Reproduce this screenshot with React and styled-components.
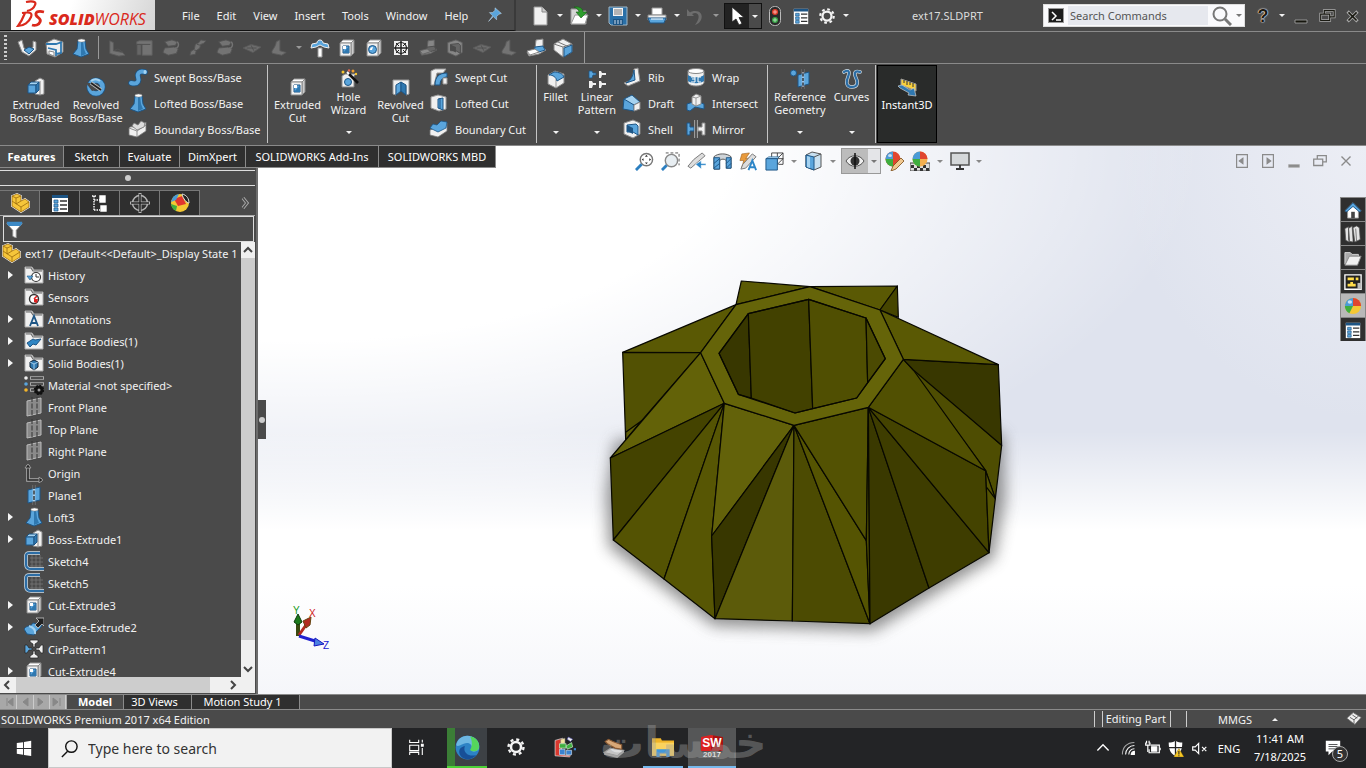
import React, { useState } from 'react';
import styled, { createGlobalStyle } from 'styled-components';

const GlobalStyle = createGlobalStyle`
  * { box-sizing: border-box; }
  body {
    margin: 0;
    background: #4a4a4a;
    font-family: 'Noto Sans', 'Open Sans', sans-serif;
    font-size: 11px;
    color: #f2f2f2;
  }
  button {
    margin: 0;
    padding: 0;
    border: none;
    background: none;
    color: inherit;
    font: inherit;
  }
  svg { display: block; flex: none; }
`;

const BLUE = '#5aa5dc';
const LIGHT = '#a5d2f0';
const NAVY = '#1d5585';
const WHITE = '#f0f0f0';
const INK = '#222';

/* ---------- icons, all on a 20 x 20 grid ---------- */

const cube = (
  <g stroke={NAVY} strokeWidth="1">
    <path d="M2 8l3-3h8l-3 3z" fill={LIGHT} />
    <path d="M2 8h8v8H2z" fill={BLUE} />
    <path d="M10 8l3-3v8l-3 3z" fill="#2f78b0" />
  </g>
);

const folderBase = (
  <g>
    <path d="M1 18V2h7l2 3h9v13z" fill={WHITE} stroke="#aaa" />
    <path d="M2 3h5l2 3h9" stroke="#666" strokeWidth="1.200" fill="none" />
  </g>
);

const boxWithHole = (
  <g>
    <path d="M3 5l3-3h11l-3 3z" fill="#fff" stroke="#999" />
    <path d="M14 5l3-3v13l-3 3z" fill="#ccc" stroke="#888" />
    <path d="M3 5h11v13H3z" fill={WHITE} stroke="#888" />
  </g>
);

const arrowHead = (x, y, r, fill) => (
  <path d="M0 -4h2l2 3h3v2H4L2 4H0z" fill={fill} stroke="#222" strokeWidth=".7" transform={`translate(${x} ${y}) rotate(${r})`} />
);

const icons = {
  extrude: <g><path d="M9 4l5-3 4 2v14l-4 1-5-1z" fill={WHITE} stroke="#888" /><path d="M14 4v14" stroke="#888" />{cube}</g>,
  revolve: <g><circle cx="10" cy="10" r="6.500" fill="none" stroke={NAVY} strokeWidth="6" /><circle cx="10" cy="10" r="6.500" fill="none" stroke={BLUE} strokeWidth="4.600" /><path d="M5 4a7 7 0 019 0" fill="none" stroke={LIGHT} strokeWidth="2" /><path d="M0 6l6 8 4-1-6-7z" fill="#4a4a4a" /><path d="M5 6l10 7" stroke="#bbb" strokeWidth="3.400" /><path d="M5 6l10 7" stroke={INK} strokeWidth="1.800" /></g>,
  sweep: <g fill="none" strokeLinecap="round"><path d="M3 16c8 2 8-3 7-6s1-7 7-5" stroke={NAVY} strokeWidth="5.600" /><path d="M3 16c8 2 8-3 7-6s1-7 7-5" stroke={BLUE} strokeWidth="4" /><ellipse cx="17" cy="5" rx="1.500" ry="2" fill={LIGHT} /></g>,
  loft: <g><path d="M7 3h7l1 8 3 5-8 3-8-3 4-5z" fill={BLUE} stroke={NAVY} /><path d="M10 4v14l5-2-2-5-1-8z" fill="#2f78b0" /><ellipse cx="10.500" cy="2.500" rx="3.500" ry="1.500" fill="#fff" stroke="#888" strokeWidth=".6" /></g>,
  boundary: <g stroke="#777" strokeWidth=".8"><path d="M1 9c3-3 5 1 8-2s5 1 9-4v9l-9 6-8-2z" fill={WHITE} /><path d="M1 9l8 3 9-6" fill="none" /><path d="M9 12v6" /><path d="M4 7l2-3 4 2 3-4 4 2-1 4-7 3z" fill="#ddd" /></g>,
  cut: <g>{boxWithHole}<path d="M6 8h6v7H6z" fill={BLUE} stroke={NAVY} /><path d="M6 8h3v3H6z" fill="#fff" /><path d="M12 8v7H6z" fill="#2f78b0" /></g>,
  hole: <g>{boxWithHole}<circle cx="8.500" cy="11.500" r="4" fill={BLUE} stroke={NAVY} /><path d="M6 12a3 3 0 013-3l-1 3z" fill="#fff" /></g>,
  wizard: <g><path d="M3 7l3-2h11l-2 2v11H3z" fill={WHITE} stroke="#888" /><circle cx="9" cy="13" r="3.500" fill={BLUE} stroke={NAVY} /><path d="M10 5l9 9" stroke="#111" strokeWidth="2.600" /><path d="M8 3l2 2" stroke="#fff" strokeWidth="2" /><circle cx="4" cy="3" r="1.500" fill="#f4c430" /><circle cx="14" cy="2" r="1.500" fill="#f0a030" /><circle cx="10" cy="1.500" r="1.200" fill="#e86a50" /><circle cx="17" cy="5" r="1.200" fill="#f4c430" /></g>,
  revolveCut: <g><path d="M2 3h16v14l-3 1V9l-5-3-5 3v9l-3-1z" fill={WHITE} stroke="#999" /><path d="M5 8l5-3v9l-5 4z" fill={BLUE} stroke={NAVY} /><path d="M15 8l-5-3v9l5 4z" fill="#2f78b0" stroke={NAVY} /></g>,
  sweptCut: <g><path d="M2 4l4-2h11l-3 4H8L5 18H2z" fill={WHITE} stroke="#999" /><path d="M6 18c0-8 4-12 12-12v4c-5 0-7 4-7 8z" fill={BLUE} stroke={NAVY} /><path d="M14 11h4v6h-4z" fill={WHITE} stroke="#999" /></g>,
  loftCut: <g><path d="M2 4l7-2 8 2v12l-7 2-8-3z" fill={WHITE} stroke="#999" /><path d="M9 6l5-1v12l-5-2z" fill={BLUE} stroke={NAVY} /><path d="M11 5v11" stroke={NAVY} /></g>,
  boundaryCut: <g strokeWidth=".8"><path d="M1 11l8-3 9-4v8l-9 6-8-2z" fill={WHITE} stroke="#777" /><path d="M1 9l3-4 4 1 4-4 6 1-1 6-8 4z" fill={BLUE} stroke={NAVY} /></g>,
  fillet: <g><path d="M2 6l7-4 9 3v9l-8 5-8-4z" fill={WHITE} stroke="#888" /><path d="M10 10v9" stroke="#999" /><path d="M8 3c5 0 9 2 10 5l-7 4C10 8 7 6 3 6z" fill={BLUE} stroke={NAVY} /></g>,
  pattern: <g strokeWidth=".8"><path d="M2 2h3l1 2h3v2H6l-1 3H2z" fill={BLUE} stroke={NAVY} /><path d="M12 2h2l1 2h4v2h-4l-1 3h-2zM2 12h3l1 2h3v2H6l-1 3H2zM12 12h2l1 2h4v2h-4l-1 3h-2z" fill={WHITE} /></g>,
  rib: <g><path d="M12 2l4-1 2 13-12 5-4-3 8-3z" fill={WHITE} stroke="#888" /><path d="M12 3l1 10-9 3c5-3 7-7 8-13z" fill={BLUE} stroke={NAVY} /></g>,
  draft: <g><path d="M2 6l8-4 8 7-6 3-10-1z" fill={LIGHT} stroke={NAVY} /><path d="M2 6l10 6v6l-11-2z" fill={BLUE} stroke={NAVY} /><path d="M12 12l6-3v7l-6 2z" fill={WHITE} stroke="#888" /></g>,
  shell: <g><path d="M2 4l9-3 7 3v11l-7 4-9-4z" fill={WHITE} stroke="#888" /><path d="M5 6l9-1 2 2v9l-5-3H5z" fill={BLUE} stroke={NAVY} /><path d="M5 6l6 3v6l-6-3z" fill={NAVY} /></g>,
  wrap: <g><path d="M2 4v12c2 4 14 4 16 0V4z" fill={WHITE} stroke="#888" /><ellipse cx="10" cy="4" rx="8" ry="2.500" fill="#fff" stroke="#888" /><path d="M2 8c4 3 12 3 16 0v6c-4 3-12 3-16 0z" fill="#2f78b0" /><path d="M5 10h4v2H6M9 12v3H5M12 10h3M12 10v5h3" stroke="#fff" fill="none" /></g>,
  intersect: <g><path d="M1 11l9-3 8 3v5l-9-2-5 4-3-1z" fill={BLUE} stroke={NAVY} /><path d="M6 4l4-3 5 2v8l-5 2-4-2z" fill={WHITE} stroke="#888" /><path d="M10 5v8M6 4l4 1 5-2" stroke="#999" fill="none" /></g>,
  mirror: <g><path d="M1 4h3v4h4v4H4v4H1z" fill={BLUE} stroke={NAVY} /><path d="M19 4h-3v4h-4v4h4v4h3z" fill={WHITE} stroke="#888" /><path d="M10 1v18" stroke="#eee" strokeWidth="3" /><path d="M10 1v18" stroke="#222" strokeWidth="1.500" /></g>,
  refgeo: <g><circle cx="3.500" cy="4" r="3" fill={BLUE} stroke={NAVY} /><path d="M8 6l11-3v12L8 18z" fill={BLUE} stroke={NAVY} /><path d="M13 0v20" stroke="#dde" strokeWidth="2.600" opacity=".5" /><path d="M13 0v20" stroke="#222" strokeWidth="1.300" strokeDasharray="3 1.500" /></g>,
  curves: <g fill="none" strokeLinecap="round"><path d="M2 3c5-3 6 0 4 5s-2 10 4 10 6-5 4-9-2-8 4-6" stroke="#ccd8e0" strokeWidth="3.600" /><path d="M2 3c5-3 6 0 4 5s-2 10 4 10 6-5 4-9-2-8 4-6" stroke="#2c6da5" strokeWidth="2.200" /></g>,
  instant: <g><path d="M4 2l15 5v7L4 8z" fill="#f7cf3c" stroke="#999" /><path d="M7 3v3M10 4v4M13 5v3M16 6v4" stroke="#333" /><path d="M1 9l4-1 8 5 4-2 2 8-8-1 1-2-9-5z" fill="#2f78b0" stroke="#ccc" strokeWidth=".7" /></g>,

  page: <g><path d="M4 1h8l5 5v13H4z" fill={WHITE} stroke="#999" /><path d="M12 1v5h5" fill="#ccc" stroke="#888" /></g>,
  open: <g><path d="M2 18V3h6l2 2h7v13z" fill="#d5d5d5" stroke="#999" /><path d="M2 18L6 9h13l-3 9z" fill="#fff" stroke="#999" /><path d="M5 1c6-1 9 2 9 5h4l-6 6-5-6h3c0-2-2-4-5-5z" fill="#2e9e2e" stroke="#155a15" strokeWidth=".6" /></g>,
  save: <g><path d="M1 1h18v18H3l-2-2z" fill="#2a70a8" stroke="#9fb6c6" /><path d="M5 2h10v8H5z" fill="#f4f4f4" /><path d="M6 4h8M6 6h8M6 8h8" stroke="#777" /><path d="M5 13h10v6H5z" fill={NAVY} /><path d="M7 14v4M10 14v4M13 14v4" stroke="#cde" /></g>,
  print: <g><path d="M5 2h10v7H5z" fill="#fff" stroke="#999" /><path d="M1 9h18v5H1z" fill={WHITE} stroke="#888" /><path d="M1 12h18l-2 5H3z" fill={BLUE} stroke={NAVY} /><path d="M4 13h12" stroke="#fff" /></g>,
  undo: <path d="M1 3v7h7L6 8c5-3 9 1 5 8l-2 3c8-2 10-14 0-14-2 0-4 .5-5 1.500z" fill="#6d6d6d" />,
  cursor: <path d="M5 1v15l4-3 3 6 3-1.500-3-6h5z" fill="#fff" stroke="#222" strokeWidth=".8" />,
  traffic: <g><rect x="4.500" y=".5" width="11" height="19" rx="5" fill="#2a2a2a" stroke="#bbb" /><circle cx="10" cy="6" r="3" fill="#e23d2b" /><circle cx="10" cy="14" r="3" fill="#3aa548" /><path d="M8 6h4M10 4v4M8 14h4M10 12v4" stroke="#fff" strokeWidth=".8" opacity=".7" /></g>,
  props: <g><path d="M2 2h16v17H2z" fill="#fff" /><path d="M2 2h16v3H2z" fill={NAVY} /><path d="M4 7h4v3H4zM4 11h4v3H4zM4 15h4v3H4z" fill={BLUE} stroke={NAVY} strokeWidth=".7" /><path d="M10 8h7M10 12h7M10 16h7" stroke="#333" strokeWidth="1.400" /></g>,
  gear: <g fill="none" stroke="#f4f4f4"><circle cx="10" cy="10" r="5" strokeWidth="2.500" /><circle cx="10" cy="10" r="7.500" strokeWidth="2.400" strokeDasharray="3 2.890" /></g>,
  pin: <path d="M10 1l8 7-3 1-3 3v4l-4-4-6 6 5-7-4-4h4l3-3z" fill={BLUE} stroke="#cfe4f4" strokeWidth=".6" />,

  weld: <g><path d="M1 4l4-2 2 8 4 3 5-4V3l3 1v8l-7 6-7-4z" fill={WHITE} stroke="#888" /><path d="M7 12l5-3 5 2-5 5z" fill={BLUE} stroke={NAVY} /></g>,
  drawer: <g><path d="M2 5l8-4 9 3v10l-8 5-8-3z" fill={WHITE} stroke="#888" /><path d="M2 6h10l6-2M4 10l8 2v6M17 5v10l-5 1" stroke="#2f78b0" strokeWidth="1.800" fill="none" /><path d="M5 13l5 1v4l-5-2z" fill="#fff" stroke="#888" /></g>,
  bend: <g><path d="M2 2l4 2v9l10 2 3 3-7 1-10-3z" fill="#bbb" stroke="#777" /><path d="M6 13l5-2 6 4" fill="none" stroke="#666" /></g>,
  frame: <g><path d="M2 6V3l3-1h14v16H8V6z" fill="#bbb" stroke="#888" /><path d="M2 6h15M7 7v11H2V6" fill="#999" stroke="#555" /></g>,
  stairs: <g><path d="M13 1l6 1-3 3-3 1-1 4-4 3-1 4-6 1 1-4 4-3 1-5 4-2z" fill="#bbb" stroke="#666" /><path d="M9 6l4 1M5 12l4 1" stroke="#555" /></g>,
  fold: <g><path d="M3 3l8-2 6 2-2 4-8 1zM3 10l10-1 5 2-2 5-9 2-6-3z" fill="#bbb" stroke="#666" /><path d="M17 3c3 4 0 8-3 7" fill="none" stroke="#bbb" strokeWidth="1.600" /></g>,
  flat: <g><path d="M0 10l9-4 11 3-9 6z" fill="#aaa" stroke="#777" /><path d="M4 10h11M9 7l3 6" stroke="#555" /></g>,
  corner: <g><path d="M7 3l4-2v12l7 2-5 3-10-2c-3-3 3-5 4-13z" fill="#bbb" stroke="#777" /></g>,
  umbrella: <g><path d="M1 10l1-4 5-1c0-4 6-4 6 0l5 1 1 4-5-1-4-2-4 2z" fill={BLUE} stroke={WHITE} /><path d="M8 10h4v9H8z" fill="#fff" stroke="#999" /></g>,
  vents: <g><path d="M3 3h14v14H3z" fill={WHITE} /><path d="M10 3v14M3 10h14" stroke="#222" strokeWidth="1.500" /><path d="M5 5l3 3M15 5l-3 3M5 15l3-3M15 15l-3-3" stroke="#222" /><circle cx="10" cy="10" r="5.500" fill="none" stroke="#222" strokeWidth="1.200" /></g>,
  bends: <g><path d="M10 2l7-1v8l3 3-7 4-10 2-2-4 8-3z" fill={WHITE} stroke="#888" /><path d="M9 9l8-1 2 4-6 2-5-1z" fill={BLUE} stroke={NAVY} /><path d="M1 13l8-2 4 3-9 3z" fill="#fff" stroke="#888" /></g>,
  solid: <g><path d="M1 6l9-5 9 5v8l-9 5-9-7z" fill={WHITE} stroke="#888" /><path d="M1 6l9 3 9-3M10 9v10M5 4l9 4" stroke="#777" fill="none" /><path d="M11 10l8-3v7l-8 5z" fill={BLUE} stroke={NAVY} /></g>,

  part: <g><path d="M2 8V3l5-2 4 2v5l4-2 4 3v5l-8 5-9-6z" fill="#f6c63a" stroke="#fff" strokeWidth="1.800" /><path d="M2 8V3l5-2 4 2v5l4-2 4 3v5l-8 5-9-6z" fill="#f6c63a" stroke="#9a6a0c" strokeWidth=".8" /><path d="M2 8l9 6v5M11 14l8-5M2 3l4 2 5-2M6 5v6l5-3" stroke="#9a6a0c" fill="none" strokeWidth=".8" /></g>,
  config: <g stroke="#fff" fill="none" strokeWidth="1.400"><path d="M2 3h4M4 3v14M4 7h6M4 17h6" strokeDasharray="1.500 1" /><path d="M10 3h5v6h-5zM11 13h5v5h-5z" fill="#fff" /></g>,
  target: <g stroke="#b5b5b5" fill="none" strokeWidth="1.500"><circle cx="10" cy="10" r="7.500" /><path d="M10 0v20M0 10h20" strokeWidth="3" /><path d="M10 1v18M1 10h18" stroke="#222" /></g>,
  ball: <g><circle cx="10" cy="10" r="9" fill="#f4c733" /><path d="M10 10V1a9 9 0 00-9 8l1 3z" fill="#4b9bd6" /><path d="M10 10V1a9 9 0 019 9z" fill="#e0452f" /><path d="M10 10H1a9 9 0 005 8z" fill="#3fae3f" /><ellipse cx="6.500" cy="5.500" rx="2.500" ry="2" fill="#fff" opacity=".7" /></g>,
  ballDark: <g><circle cx="10" cy="10" r="9" fill="#f4c733" /><path d="M4 6l8-3 4 8-8 2z" fill="#e0352f" /><path d="M1 11l6 2-1 5a9 9 0 01-5-7z" fill="#3fae3f" /><path d="M3 4a9 9 0 016-3l-3 6-5 2z" fill="#4b9bd6" /><path d="M12 1c5 1 7 5 7 9-2 0-6-4-7-9z" fill="#222" stroke="#ddd" /></g>,
  filter: <g><path d="M1 3h18l-7 8v9l-4-2v-7z" fill="#fff" stroke="#999" /><path d="M1 1h18v2l-2 3H3L1 3z" fill="#3d8ac6" /></g>,
  history: <g>{folderBase}<circle cx="12" cy="12" r="4.500" fill="#fff" stroke="#333" strokeWidth="1.200" /><path d="M12 9v3h3" stroke="#333" fill="none" /><path d="M3 11h6l-3 4z" fill={BLUE} stroke={NAVY} strokeWidth=".6" /></g>,
  sensors: <g>{folderBase}<circle cx="10" cy="12" r="4.500" fill="#fff" stroke="#333" strokeWidth="1.400" /><path d="M10 12l3-3" stroke="#e02020" strokeWidth="1.600" /><path d="M10 12h4l-1 4-3-1z" fill="#e02020" /></g>,
  annotations: <g>{folderBase}<path d="M6 17l4-10 4 10M7.500 14h5" stroke={NAVY} strokeWidth="1.800" fill="none" /></g>,
  surfaces: <g>{folderBase}<path d="M3 12l6-4 2 1 6-1-5 6-3-1-3 3z" fill="#2f86c4" stroke={NAVY} /></g>,
  solids: <g>{folderBase}<path d="M6 9l4-2 4 2v5l-4 3-4-3z" fill="#2f78b0" stroke="#123" /><path d="M6 9l4 2 4-2M10 11v6" stroke="#bfe0f5" fill="none" strokeWidth=".8" /></g>,
  material: <g><path d="M6 3h14M6 9h14M6 15h6" stroke="#aaa" strokeWidth="3.400" /><path d="M7 3h12M7 9h12M7 15h5" stroke="#333" strokeWidth="1.600" /><circle cx="2" cy="3" r="1.800" fill="#eee" /><circle cx="2" cy="9" r="1.800" fill={BLUE} /><circle cx="2" cy="15" r="1.800" fill="#f4b52a" /><circle cx="15" cy="15" r="3" fill="#999" stroke="#111" strokeWidth="3" /><circle cx="15" cy="15" r="4.500" fill="none" stroke="#111" strokeWidth="1.500" strokeDasharray="2 1.500" /></g>,
  plane: <g><path d="M3 4l14-3v15L3 19z" fill="#8a8a8a" stroke="#bbb" /><path d="M8 0v20M13 0v19" stroke="#333" strokeDasharray="5 1.500" /></g>,
  planeBlue: <g><path d="M4 5l12-3v13L4 18z" fill={BLUE} stroke={NAVY} /><path d="M10 0v20" stroke="#fff" strokeWidth="2.600" opacity=".5" /><path d="M10 0v20" stroke="#222" strokeWidth="1.300" strokeDasharray="4 1.500" /></g>,
  origin: <g fill="none"><path d="M4 2v15h14" stroke="#aaa" strokeWidth="3.600" /><path d="M4 2v15h14" stroke="#222" strokeWidth="1.600" /><path d="M1 5l3-4 3 4zM15 14l4 3-4 3z" fill="#222" stroke="#aaa" strokeWidth=".8" /></g>,
  sketch: <g><path d="M8 4v12M12 4v12M16 4v12M6 7h13M6 11h13M6 15h13" stroke="#777" strokeWidth=".8" /><path d="M16 2H5Q2 2 2 5v8q0 5 5 5h13" fill="none" stroke="#d5e2ec" strokeWidth="3.600" /><path d="M16 2H5Q2 2 2 5v8q0 5 5 5h13" fill="none" stroke="#2c6da5" strokeWidth="2.200" /></g>,
  surfExtrude: <g><path d="M0 12c4-5 6-1 9-6l9 2c-3 6-5 4-8 10l-7-1z" fill={BLUE} stroke={NAVY} /><path d="M5 9c3 1 7 3 6 8" stroke={LIGHT} fill="none" strokeWidth="2" /><path d="M12 1h8v8l-2-2-4 4-3-3 4-4z" stroke="#ccc" fill="#222" strokeWidth=".8" /></g>,
  circular: <g>{arrowHead(1, 10, 0, BLUE)}{arrowHead(19, 10, 180, WHITE)}{arrowHead(10, 1, 90, WHITE)}{arrowHead(10, 19, 270, WHITE)}</g>,

  zoomFit: <g><circle cx="12" cy="8" r="6.500" fill="#fff" stroke="#777" strokeWidth="1.500" /><path d="M12 3l1.500 2h-3zM12 13l1.500-2h-3zM7 8l2-1.500v3zM17 8l-2-1.500v3z" fill="#333" /><path d="M7 13l-6 6" stroke="#2c7fc0" strokeWidth="3" /></g>,
  zoomArea: <g><path d="M5 1h14v13" fill="none" stroke="#555" strokeDasharray="3 2" /><circle cx="11" cy="9" r="6.500" fill="#e8eef2" stroke="#888" strokeWidth="1.500" /><path d="M6 14l-5 5" stroke="#2c7fc0" strokeWidth="3" /></g>,
  previous: <g><path d="M16 1l3 3-7 6-8 7-3-2 6-7z" fill="#ddd" stroke="#777" /><path d="M20 14h-5v4l-6-5 6-4v3h5z" fill="#2c86c8" stroke="#fff" strokeWidth=".6" /></g>,
  section: <g><path d="M1 5c4-4 14-4 18 0v12h-5V9c-2-2-5-2-7 0v9H1z" fill="#cfd4d8" stroke="#555" /><path d="M1 6h6v12H1zM14 6h5v11h-5z" fill={BLUE} stroke={NAVY} /><path d="M1 12l6-5M1 17l6-5M14 12l5-5M14 17l5-5" stroke={NAVY} /></g>,
  viewText: <g><path d="M3 2l8-1-4 6 5-1-9 10 2-7H1z" fill="#e89a3c" stroke="#9b5a14" strokeWidth=".6" /><path d="M14 2l4 3-11 12-5 1 2-5z" fill="#ddd" stroke="#777" /><path d="M10 19l4-10 4 10M11.500 16h5" fill="none" stroke="#2c86c8" strokeWidth="2" /></g>,
  orient: <g><path d="M7 1h12v12h-5M7 1v6M13 1v12M7 7h12M13 7l6-6M13 13l6-6" fill="none" stroke="#333" strokeWidth=".9" /><path d="M1 7l3-2h11l-2 2z" fill={LIGHT} stroke={NAVY} strokeWidth=".6" /><path d="M1 7h12v12H1z" fill={BLUE} stroke={NAVY} /></g>,
  display: <g><path d="M2 4l6-3 9 2v13l-7 3-8-3z" fill="#c8e0f0" stroke="#555" /><path d="M2 4l8 2v13l-8-3z" fill={BLUE} stroke={NAVY} /><path d="M10 6l7-3" stroke="#555" /><path d="M3 5l3 1v11l-3-1z" fill={LIGHT} /></g>,
  eye: <g><path d="M1 10c4-7 14-7 18 0-4 7-14 7-18 0z" fill="#eee" stroke="#555" /><circle cx="10" cy="10" r="4.500" fill="#333" /><path d="M10 2v16" stroke="#111" strokeWidth="1.500" /></g>,
  appearance: <g><circle cx="9" cy="8" r="7.500" fill="#e0452f" /><path d="M9 8V.5A7.500 7.500 0 001.500 8z" fill="#4b9bd6" /><path d="M9 8H1.500A7.500 7.500 0 009 15.500z" fill="#3fae3f" /><ellipse cx="6" cy="4.500" rx="2" ry="1.500" fill="#fff" opacity=".7" /><path d="M17 7l3 3-8 8-5 2 2-5z" fill="#f0c890" stroke="#7a4a14" strokeWidth=".8" /></g>,
  scene: <g><path d="M0 12h20v8H0z" fill="#ddd" stroke="#444" /><path d="M1 14h3v3H1zM7 14h3v3H7zM13 14h3v3h-3zM4 17h3v3H4zM10 17h3v3h-3zM16 17h3v3h-3z" fill="#333" /><circle cx="10" cy="8" r="7.500" fill="#f4b050" /><path d="M10 8V.5A7.500 7.500 0 002.500 8z" fill="#4b9bd6" /><path d="M10 8V.5A7.500 7.500 0 0117.500 8z" fill="#e0452f" /><path d="M10 8H2.500a7.500 7.500 0 007.500 7.500z" fill="#3fae3f" /></g>,
  monitor: <g><path d="M1 2h18v12H1z" fill="#d5d8da" stroke="#555" strokeWidth="1.500" /><path d="M10 14v4M6 18h8" stroke="#333" strokeWidth="1.800" /></g>,
  paneLeft: <g fill="none" stroke="#8a8a8a" strokeWidth="1.300"><path d="M4 3h12v14H4z" /><path d="M11 7l-4 3 4 3z" fill="#8a8a8a" /></g>,
  paneRight: <g fill="none" stroke="#8a8a8a" strokeWidth="1.300"><path d="M4 3h12v14H4z" /><path d="M9 7l4 3-4 3z" fill="#8a8a8a" /></g>,
  minimize: <path d="M4 14h12v3H4z" fill="currentColor" stroke="#aaa" strokeWidth=".8" />,
  restore: <g fill="none" stroke="currentColor" strokeWidth="1.400"><path d="M3 8h10v7H3zM7 8V4h10v7h-4" /></g>,
  close: <path d="M5 5l10 10M15 5L5 15" stroke="currentColor" strokeWidth="1.500" />,
  frameRestore: <g fill="none"><path d="M3 8h10v7H3zM7 8V4h11v7h-5" stroke="#aaa" strokeWidth="3" /><path d="M3 8h10v7H3zM7 8V4h11v7h-5" stroke="#1a1a12" strokeWidth="1.300" /></g>,
  frameClose: <g><path d="M4 5l11 11M15 5L4 16" stroke="#aaa" strokeWidth="3.600" /><path d="M5 6l9 9M14 6l-9 9" stroke="#1a1a12" strokeWidth="1.800" /></g>,

  home: <g><path d="M10 2l9 9h-3v8H4v-8H1z" fill="#fff" stroke="#999" /><path d="M1 11l9-9 9 9-2 1-7-6-7 6z" fill={BLUE} stroke={NAVY} /><path d="M8 12h4v7H8z" fill="#444" /></g>,
  books: <g fill="#e4e4e4" stroke="#555" strokeWidth=".8"><path d="M1 4l4-2v14l1 3-4-2zM5 4l4-3 1 15v3l-4-1zM10 3l4-2 3 2 1 13-6 3z" /><path d="M13 4l1 14M5 4l1 13" /></g>,
  folderPlain: <g><path d="M1 17V4h6l2 2h7v3" fill="#aaa" stroke="#ddd" /><path d="M1 18L6 8h13l-4 10z" fill={WHITE} stroke="#888" /></g>,
  palette: <g><path d="M1 2h18v16H1z" fill="#222" stroke="#fff" strokeWidth="1.500" /><path d="M4 5h7v3H4zM13 5h3v3h-3zM7 10h3v2h3v3H4v-3h3z" fill="#ffdc4a" /><path d="M15 11h4v7h-4z" fill="#bbb" /></g>,

  windows: <path d="M2 4.500l7-1V10H2zM10 3.300L18 2v8h-8zM2 11h7v6.500l-7-1zM10 11h8v8l-8-1.300z" fill="#fff" />,
  search: <g fill="none" stroke="currentColor" strokeWidth="1.500"><circle cx="12" cy="8" r="6" /><path d="M8 13l-6 6" /></g>,
  lens: <g fill="none" stroke="#777"><circle cx="8" cy="8" r="6.500" strokeWidth="2" /><path d="M13 13l6 6" strokeWidth="3" /></g>,
  taskView: <g fill="none" stroke="#fff" strokeWidth="1.200"><path d="M3 2v3h10V2M3 8h10v6H3zM3 19v-3h10v3M17 2v3M17 11v8" /><path d="M16 7h2v2h-2z" fill="#fff" /></g>,
  edge: <g><circle cx="10" cy="10" r="9.500" fill="#2d83c5" /><path d="M1 8C2 2 8-1 14 1.500c5 2 6 7 5 9.500s-5 3-6 1c2-4-2-7-6-5-3 1-5 3-6 1z" fill="#6db7e2" /><path d="M12 1c6 1 8 6 7 10-1 2-5 3-7 1 2-3 2-7 0-11z" fill="#55d65c" /><path d="M8 9c-2 4 2 9 9 7-3 4-10 5-13 0-2-4 1-7 4-7z" fill="#174f97" /></g>,
  blocks: <g><path d="M1 4l7-2-2 15 9 1-1 1-13-1z" fill="#d9382e" stroke="#eee" strokeWidth=".6" /><path d="M6 3l4-1v5H6z" fill="#f2e2a0" stroke="#777" strokeWidth=".5" /><path d="M5 7h6v4H5z" fill="#3fae3f" stroke="#d5f0d5" strokeWidth=".6" /><path d="M11 9l5-3 1 4-5 2z" fill="#3fae3f" stroke="#d5f0d5" strokeWidth=".6" /><path d="M13 1l4 2-2 2-3-2z" fill="#eee" stroke="#55a" strokeWidth=".6" /><path d="M5 12h5v5H5zM11 13h5v4h-5z" fill="#3b82d0" stroke="#d0e4f8" strokeWidth=".6" /><path d="M18 11h2v2h-2z" fill="#3b82d0" /></g>,
  disk: <g><path d="M1 15l6-4 12 2-6 5z" fill="#ddd" stroke="#999" /><path d="M1 15v2l12 3 6-5v-2l-6 5z" fill="#aaa" /><path d="M2 5l3-2 4 2 8 3v4l-6-1-7-4z" fill="#d8a878" stroke="#8a5a34" /></g>,
  explorer: <g><path d="M0 2h8l1 2h11v14H0z" fill="#f0b429" /><path d="M0 6h20v12H0z" fill="#fbd35e" /><path d="M4 19v-7h12v7h-3v-3H7v3z" fill="#3f97dd" /></g>,
  chevronUp: <path d="M3 13l7-7 7 7" fill="none" stroke="#fff" strokeWidth="1.700" />,
  wifi: <g fill="none" stroke="#fff" strokeWidth="1.300"><path d="M3 18C3 9 9 3 18 3" opacity=".6" /><path d="M7 18c0-6 5-11 11-11M11 18c0-4 3-7 7-7" /><path d="M14 18c0-2 2-4 4-4v4z" fill="#fff" /></g>,
  battery: <g fill="none" stroke="#fff" strokeWidth="1.400"><path d="M8 6h10v9H6v-4" /><path d="M9 8h6v5H9z" fill="#fff" /><path d="M19 9v3M2 3v3h5V3M4.500 6v8M3 1v3M6 1v3" /></g>,
  shield: <g><path d="M10 1c3 2 5 2 8 2 0 8-2 13-8 16C4 16 2 11 2 3c3 0 5 0 8-2z" fill="#fff" /><path d="M10 1v18M2 9h16" stroke="#222" strokeWidth="1.500" /><path d="M14 10l6 10H8z" fill="#f6c725" stroke="#7a5a00" strokeWidth=".5" /><path d="M14 13v4M14 18v1" stroke="#222" strokeWidth="1.200" /></g>,
  mute: <g fill="none" stroke="#fff" strokeWidth="1.400"><path d="M2 8h3l4-4v12l-4-4H2zM13 8l5 5M18 8l-5 5" /></g>,
  notes: <path d="M2 2h16v12h-9l-4 4v-4H2zM5 5.500v1h10v-1zM5 8v1h10V8zM5 10.500v1h10v-1z" fill="#fff" fillRule="evenodd" />,
  stamp: <g><path d="M1 9l8-7 10 6-8 9z" fill="#eee" stroke="#666" /><path d="M5 8l5 3 6-5M10 11v5M8 5l6 4" stroke="#444" fill="none" /></g>,
};

const Icon = ({ name, size = 20 }) => (
  <svg width={size} height={size} viewBox="0 0 20 20" aria-hidden="true">{icons[name]}</svg>
);

const Caret = styled.span`
  width: 0;
  height: 0;
  border: 3px solid transparent;
  border-top-color: ${p => p.$color || '#f2f2f2'};
  border-bottom-width: 0;
`;

const Arrow = ({ width, color, label }) => (
  <IconButton $width={width} aria-label={label}><Caret $color={color} /></IconButton>
);

const IconButton = styled.button`
  display: flex;
  flex: none;
  align-items: center;
  justify-content: center;
  width: ${p => p.$width || 26}px;
  height: 100%;
  color: ${p => p.$color || 'inherit'};
  ${p => p.$dim && 'opacity: 0.36; filter: grayscale(1);'}
`;

/* ---------- window frame ---------- */

const Window = styled.div`
  display: flex;
  flex-direction: column;
  height: 100vh;
  overflow: hidden;
  cursor: default;
`;

const TitleBar = styled.header`
  display: flex;
  flex: none;
  height: 32px;
  border-bottom: 1px solid #8a8a8a;
  background: #4a4a4a;
`;

const MenuArea = styled.div`
  display: flex;
  flex: none;
  width: 516px;
  padding-left: 11px;
  border-right: 2px solid #3a3a3a;
  border-bottom: 1px solid #111;
`;

const Logo = styled.div`
  display: flex;
  flex: none;
  align-items: center;
  gap: 4px;
  width: 144px;
  padding-left: 5px;
  background: linear-gradient(110deg, #fff 40%, #d5d5d5);
  color: #da291c;
`;

const LogoText = styled.span`
  padding-top: 7px;
  font: italic 16px/18px 'Open Sans', sans-serif;
  b { font-weight: 800; }
`;

const MenuNav = styled.nav`
  display: flex;
  flex: 1;
  gap: 17px;
  padding-left: 27px;
`;

const PinButton = styled(IconButton)`
  width: 20px;
`;

const QuickTools = styled.div`
  display: flex;
  padding-left: 11px;
`;

const SelectTool = styled.div`
  display: flex;
  height: 26px;
  margin: 3px 0 0 2px;
  border: 1px solid #111;
  background: #4a4a4a;
  button:first-child { background: #222; }
`;

const FileName = styled.span`
  flex: 1;
  align-self: center;
  text-align: center;
  color: #ddd;
`;

const CommandSearch = styled.label`
  display: flex;
  align-items: center;
  width: 202px;
  height: 23px;
  margin-top: 4px;
  padding: 0 2px 0 4px;
  gap: 4px;
  border: 1px solid #ddd;
  background: #fafafc;
`;

const Prompt = styled.span`
  display: flex;
  align-items: center;
  justify-content: center;
  width: 16px;
  height: 15px;
  border: 1px solid #999;
  background: #1c1c1c;
`;

const CommandInput = styled.input`
  flex: 1;
  min-width: 0;
  height: 19px;
  padding: 0 2px;
  border: none;
  background: #e6e8ee;
  font: inherit;
  &::placeholder { color: #555; opacity: 1; }
`;

const WindowButtons = styled.div`
  display: flex;
  padding-left: 5px;
  color: #16160e;
`;

const HelpMark = styled.span`
  font: bold 18px/18px 'Liberation Sans', sans-serif;
  color: #1a1a12;
  text-shadow: 0 0 1px #fff, 0 0 1px #fff, 0 0 2px #ccc;
`;

const ToolStrip = styled.div`
  display: flex;
  flex: none;
  height: 32px;
  border-bottom: 1px solid #8a8a8a;
`;

const Grip = styled.div`
  width: 3px;
  margin: 3px 6px 3px 4px;
  background: repeating-linear-gradient(#ccc 0 2px, transparent 2px 4px);
`;

const StripRule = styled.div`
  width: 1px;
  margin: 4px;
  background: #999;
`;

const StripEnd = styled.div`
  width: 9px;
  border-right: 1px solid #999;
`;

const Ribbon = styled.div`
  display: flex;
  flex: none;
  height: 82px;
  padding-left: 6px;
  border-bottom: 1px solid #8a8a8a;
`;

const RibbonRule = styled.div`
  flex: none;
  width: 1px;
  margin: 1px ${p => p.$after ?? 4}px 2px 0;
  background: #c4c4c4;
`;

const BigButton = styled.button`
  display: flex;
  flex: none;
  flex-direction: column;
  align-items: center;
  gap: 1px;
  width: ${p => p.$width}px;
  padding-top: ${p => (p.$menu ? 5 : 13)}px;
  line-height: 13px;
  ${p => p.$active && `
    height: 78px;
    margin: 1px 0 0 1px;
    padding-top: 11px;
    border: 1px solid #000;
    background: #292b2a;
    color: #fff;
  `}
  ${Caret} {
    margin: auto 0 11px;
  }
`;

const SmallList = styled.div`
  display: flex;
  flex: none;
  flex-direction: column;
  width: ${p => p.$width}px;
  padding-left: 2px;
`;

const SmallButton = styled.button`
  display: flex;
  align-items: center;
  gap: 6px;
  height: 26px;
  white-space: nowrap;
`;

/* ---------- document area ---------- */

const Workspace = styled.main`
  display: flex;
  flex: 1;
  flex-direction: column;
  min-height: 0;
  background:
    linear-gradient(to bottom, rgba(255, 255, 255, 0) 52%, #fff 70%, #fff 80%, #f5f6fa 100%),
    radial-gradient(ellipse 66% 74% at 22% 0%, #fff 48%, rgba(255, 255, 255, 0) 100%),
    radial-gradient(ellipse 18% 50% at 100% 0%, #eceef5, rgba(236, 238, 245, 0)),
    #dfe3ee;
`;

const TopRow = styled.div`
  display: flex;
  flex: none;
  align-items: flex-start;
  height: 22px;
`;

const Tabs = styled.div`
  display: flex;
  flex: none;
  height: 22px;
  border-bottom: 1px solid #8a8a8a;
`;

const Tab = styled.button`
  width: ${p => p.$width}px;
  border-right: 1px solid #8a8a8a;
  background: ${p => (p.$active ? '#4a4a4a' : '#2f2f2f')};
  color: #fff;
  font-weight: ${p => (p.$active ? 700 : 400)};
  white-space: nowrap;
`;

const HeadsUp = styled.div`
  display: flex;
  flex: 1;
  height: 28px;
  padding: 2px 7px 0 135px;
`;

const VisibilityTool = styled.div`
  display: flex;
  margin: 0 0 0 2px;
  border: 1px solid #999;
  background: #e4e5e8;
  button:first-child { background: #bcbcbc; }
`;

const Spacer = styled.div`
  flex: 1;
`;

const Body = styled.div`
  display: flex;
  flex: 1;
  min-height: 0;
`;

const SidePanel = styled.aside`
  display: flex;
  flex: none;
  flex-direction: column;
  width: 258px;
  padding: 2px 1px 1px 0;
  border-right: 2px solid #6c6c6c;
  background: #4a4a4a;
`;

const PanelHandle = styled.div`
  display: flex;
  flex: none;
  align-items: center;
  justify-content: center;
  height: 16px;
  border: solid #ddd;
  border-width: 1px 0;
`;

const Dot = styled.i`
  width: 6px;
  height: 6px;
  border-radius: 50%;
  background: #ccc;
`;

const PanelTabs = styled.div`
  display: flex;
  flex: none;
  height: 26px;
  margin-top: 4px;
  border-bottom: 1px solid #aaa;
`;

const PanelTab = styled.button`
  display: flex;
  align-items: center;
  justify-content: center;
  width: 40px;
  border-top: 1px solid #777;
  border-right: 1px solid #777;
  background: ${p => (p.$active ? '#4a4a4a' : '#2f2f2f')};
`;

const MoreTabs = styled.button`
  margin: 0 4px 0 auto;
`;

const FilterBox = styled.label`
  display: flex;
  flex: none;
  align-items: center;
  height: 26px;
  margin: 0 1px 0 3px;
  padding-left: 2px;
  border: 1px solid #ddd;
  input {
    flex: 1;
    min-width: 0;
    border: none;
    background: none;
    color: #fff;
  }
`;

const TreeArea = styled.div`
  display: flex;
  flex: 1;
  min-height: 0;
`;

const Tree = styled.ul`
  flex: 1;
  min-width: 0;
  margin: 0;
  padding: 0;
  overflow: hidden;
  list-style: none;
`;

const TreeRow = styled.li`
  display: flex;
  align-items: center;
  height: 22px;
  gap: 4px;
  padding-left: ${p => (p.$root ? 1 : 0)}px;
  white-space: pre;
`;

const Expander = styled.button`
  width: 20px;
  height: 22px;
  padding-left: 8px;
`;

const Triangle = styled.i`
  display: block;
  width: 0;
  height: 0;
  border: 4px solid transparent;
  border-left: 5px solid #f4f4f4;
  border-right-width: 0;
`;

const VScroll = styled.div`
  display: flex;
  flex-direction: column;
  justify-content: space-between;
  align-items: center;
  width: 14px;
  padding: 3px 0;
  background: #f0f0f0;
`;

const VThumb = styled.div`
  flex: 1;
  width: 100%;
  margin: 3px 0 24px;
  background: #cdcdcd;
`;

const HScroll = styled.div`
  display: flex;
  flex: none;
  align-items: center;
  height: 16px;
  padding: 0 17px 0 2px;
  background: #f0f0f0;
`;

const HThumb = styled.div`
  flex: 1;
  height: 100%;
  margin: 0 18px 0 4px;
  background: #cdcdcd;
`;

const Viewport = styled.section`
  position: relative;
  flex: 1;
  min-width: 0;
  > svg { width: 100%; height: 100%; }
`;

const PanelToggle = styled.button`
  position: absolute;
  left: 0;
  top: 232px;
  display: flex;
  align-items: center;
  justify-content: center;
  width: 8px;
  height: 39px;
  background: #4a4a4a;
`;

const TaskPane = styled.aside`
  flex: none;
  width: 26px;
  padding-top: 29px;
`;

const PaneButton = styled.button`
  display: flex;
  align-items: center;
  justify-content: center;
  width: 26px;
  height: 24px;
  border: 1px solid #888;
  border-bottom-width: 0;
  background: ${p => (p.$active ? '#b8b8b8' : '#2f2f2f')};
`;

/* ---------- bottom bars ---------- */

const BottomTabs = styled.div`
  display: flex;
  flex: none;
  height: 16px;
  border: solid #8a8a8a;
  border-width: 1px 0;
`;

const Rewind = styled.div`
  display: flex;
  width: 67px;
  padding: 0 1px;
  background: #a8a8a8;
  button {
    flex: 1;
    border-right: 1px solid #ccc;
    color: #888;
  }
  svg { margin: auto; }
`;

const BottomTab = styled(Tab)`
  padding-right: ${p => (p.$active ? 0 : 6)}px;
  line-height: 12px;
`;

const StatusBar = styled.footer`
  display: flex;
  flex: none;
  align-items: center;
  height: 18px;
  padding: 0 4px 0 1px;
`;

const StatusCell = styled.span`
  height: 16px;
  padding: 0 4px 0 ${p => p.$pad ?? 4}px;
  border-left: 1px solid #ccc;
  line-height: 16px;
  white-space: nowrap;
`;

const Units = styled.button`
  display: flex;
  align-items: center;
  gap: 20px;
  width: 128px;
  ${Caret} { transform: rotate(180deg); }
`;

const Taskbar = styled.nav`
  position: relative;
  display: flex;
  flex: none;
  height: 40px;
  background: #232426;
`;

const StartButton = styled(IconButton)`
  background: #2d2e30;
`;

const TaskSearch = styled.label`
  display: flex;
  align-items: center;
  width: 344px;
  padding-left: 11px;
  gap: 9px;
  border: 1px solid #c8c8c8;
  background: #f2f2f2;
  color: #111;
  input {
    flex: 1;
    min-width: 0;
    padding: 0;
    border: none;
    background: none;
    font: 14px 'Noto Sans', sans-serif;
  }
  input::placeholder { color: #333; opacity: 1; }
`;

const TaskButton = styled(IconButton)`
  margin-right: ${p => p.$gap || 0}px;
  border-bottom: 2px solid ${p => p.$line || 'transparent'};
  background: ${p => p.$fill || 'none'};
`;

const Tray = styled.div`
  display: flex;
  align-items: center;
  margin-left: auto;
  padding-right: 5px;
  color: #fff;
`;

const Clock = styled.time`
  width: 66px;
  line-height: 18px;
  text-align: center;
`;

const Notifications = styled.button`
  position: relative;
  width: 48px;
  height: 100%;
  padding-left: 11px;
`;

const Badge = styled.span`
  position: absolute;
  left: 19px;
  top: 18px;
  width: 16px;
  height: 16px;
  border: 1px solid #aaa;
  border-radius: 50%;
  background: #333;
  line-height: 14px;
`;

const CubeIcon = styled.span`
  display: flex;
  flex-direction: column;
  width: 22px;
  font: bold 12px/16px 'Liberation Sans', sans-serif;
  color: #fff;
  text-align: center;
`;

const CubeFace = styled.span`
  background: linear-gradient(100deg, #d22 50%, #a11 50%);
  clip-path: polygon(0 12%, 45% 0, 100% 12%, 100% 100%, 0 100%);
`;

const CubeYear = styled.span`
  font-size: 8px;
  line-height: 8px;
`;

const Watermark = styled.span`
  position: absolute;
  left: 600px;
  bottom: -6px;
  font: bold 44px/62px 'DejaVu Sans', sans-serif;
  color: rgba(160, 160, 160, 0.42);
  pointer-events: none;
`;

/* ---------- data ---------- */

const menus = ['File', 'Edit', 'View', 'Insert', 'Tools', 'Window', 'Help'];

const strip = ['bend', 'frame', 'fold', 'stairs', 'fold', 'flat', 'corner'];

const stripRight = [
  ['umbrella'], ['cut'], ['hole'], ['vents'], ['bends', 1], ['shell', 1], ['flat', 1], ['corner', 1], ['bends'], ['solid'],
];

const tree = [
  ['history', 'History', true],
  ['sensors', 'Sensors'],
  ['annotations', 'Annotations', true],
  ['surfaces', 'Surface Bodies(1)', true],
  ['solids', 'Solid Bodies(1)', true],
  ['material', 'Material <not specified>'],
  ['plane', 'Front Plane'],
  ['plane', 'Top Plane'],
  ['plane', 'Right Plane'],
  ['origin', 'Origin'],
  ['planeBlue', 'Plane1'],
  ['loft', 'Loft3', true],
  ['extrude', 'Boss-Extrude1', true],
  ['sketch', 'Sketch4'],
  ['sketch', 'Sketch5'],
  ['cut', 'Cut-Extrude3', true],
  ['surfExtrude', 'Surface-Extrude2', true],
  ['circular', 'CirPattern1'],
  ['cut', 'Cut-Extrude4', true],
];

const commandTabs = [
  ['Features', 64], ['Sketch', 56], ['Evaluate', 60], ['DimXpert', 66], ['SOLIDWORKS Add-Ins', 133], ['SOLIDWORKS MBD', 117],
];

const faces = [
  ['438,134 454,63 660,80', '#5b5a04'],
  ['660,80 922,78 870,150', '#5a5904'],
  ['870,150 922,78 925,172', '#464500'],
  ['332,278 98,277 438,134', '#5a5904'],
  ['98,277 332,278 155,482 107,540', '#525103'],
  ['107,517 155,482 107,540', '#5c5b05'],
  ['332,278 403,430 61,594 107,540', '#636208'],
  ['403,430 61,594 70,840', '#444300'],
  ['403,430 70,840 222,957', '#545303'],
  ['403,430 222,957 375,1076 365,828', '#575604'],
  ['403,430 365,828 612,496', '#63620a'],
  ['612,496 365,828 375,1076', '#383700'],
  ['612,496 375,1076 607,1083', '#5c5b0a'],
  ['612,496 607,1083 840,1091', '#4c4b02'],
  ['612,496 840,1091 829,842', '#555402'],
  ['612,496 829,842 835,442', '#535203'],
  ['835,442 829,842 840,1091', '#4c4b02'],
  ['835,442 840,1091 1017,984', '#3a3900'],
  ['835,442 1017,984 1197,878', '#3e3d00'],
  ['835,442 1197,878 1187,632', '#444300'],
  ['940,298 1235,556 1216,716 1187,632', '#4e4d02'],
  ['835,442 1187,632 970,330 940,298', '#515002'],
  ['940,298 1225,314 1235,556 970,330', '#383700'],
  ['870,150 1225,314 940,298', '#5a5904'],
  ['1187,632 1216,716 1197,878', '#545303'],
  ['438,134 660,80 870,150 940,298 835,442 612,496 403,430 332,278', '#656409'],
  ['387,280 475,161 484,414 445,403', '#383700'],
  ['475,161 656,118 668,446 615,459 484,414', '#424100'],
  ['656,118 828,174 833,368 800,414 668,446', '#504f02'],
  ['828,174 886,296 833,368', '#4b4a02'],
];

const Model = () => (
  <svg viewBox="258 168 1082 526" role="img" aria-label="Part model">
    <defs>
      <filter id="soft" x="-20%" y="-20%" width="140%" height="140%"><feGaussianBlur stdDeviation="22" /></filter>
    </defs>
    <g transform="translate(590 260) scale(.33333)">
      <path d="M75 540L48 700 56 860 372 1098 850 1114 1212 895 1246 720 1240 520z" fill="#555" opacity=".65" filter="url(#soft)" />
      <g stroke="#080800" strokeWidth="3.600" strokeLinejoin="round">
        {faces.map(([points, fill]) => <polygon key={points} points={points} fill={fill} />)}
        <path d="M387 280L475 161 656 118 828 174 886 296 800 414 615 459 445 403z" fill="none" />
        <path d="M1190 682L1216 716" />
      </g>
    </g>
    <g fontFamily="Liberation Sans" fontSize="10">
      <path d="M298 636V620" stroke="#3a4a10" strokeWidth="4" />
      <path d="M298 614l4 8-4 3-4-3z" fill="#1c7a1c" stroke="#0b3d0b" />
      <path d="M299 635l7-10" stroke="#b22a20" strokeWidth="3" />
      <path d="M303 621l8-4-1 8-4 3z" fill="#b22a20" stroke="#641" />
      <path d="M299 636l16 5" stroke="#2020d0" strokeWidth="3" />
      <path d="M315 638l9 6-10 2z" fill="#4a80e0" stroke="#1515c0" />
      <text x="293" y="614" fill="#1a9a1a">Y</text>
      <text x="309" y="617" fill="#d02020">X</text>
      <text x="323" y="649" fill="#2020d0">Z</text>
    </g>
  </svg>
);

const Chevron = ({ d }) => (
  <svg width="10" height="10" viewBox="0 0 10 10"><path d={d} fill="none" stroke="#444" strokeWidth="2" /></svg>
);

const Big = ({ icon, width, menu, active, children }) => (
  <BigButton $width={width} $menu={menu} $active={active}>
    <Icon name={icon} />
    <span>{children}</span>
    {menu && <Caret />}
  </BigButton>
);

const List = ({ width, items }) => (
  <SmallList $width={width}>
    {items.map(([icon, text]) => (
      <SmallButton key={text}><Icon name={icon} />{text}</SmallButton>
    ))}
  </SmallList>
);

const rewindIcons = ['M3 1v8M9 1L4 5l5 4z', 'M8 1L3 5l5 4z', 'M2 1l5 4-5 4z', 'M1 1l5 4-5 4zM8 1v8'];

export default function App() {
  const [tab, setTab] = useState('Features');

  return (
    <Window>
      <GlobalStyle />
      <TitleBar>
        <MenuArea>
          <Logo>
            <svg width="29" height="30" viewBox="0 0 29 30" fill="none" stroke="#da291c" strokeWidth="2.200">
              <path d="M10 2c5-1 11-1 9 3-1 3-4 5-8 6" />
              <path d="M6 13c6-1 11-1 9 4-2 5-7 9-13 9 3-4 5-8 7-13" />
              <path d="M28 12c-4-1-9-1-8 3 1 3 6 3 4 7-1 3-5 4-8 3" strokeWidth="2.800" />
            </svg>
            <LogoText><b>SOLID</b>WORKS</LogoText>
          </Logo>
          <MenuNav>
            {menus.map(m => <button key={m}>{m}</button>)}
            <PinButton aria-label="Pin menu"><Icon name="pin" size={16} /></PinButton>
          </MenuNav>
        </MenuArea>
        <QuickTools>
          {['page', 'open', 'save', 'print', 'undo'].map(n => (
            <React.Fragment key={n}>
              <IconButton aria-label={n}><Icon name={n} /></IconButton>
              <Arrow width={13} label={`${n} options`} color={n === 'undo' ? '#999' : undefined} />
            </React.Fragment>
          ))}
          <SelectTool>
            <IconButton $width={24} aria-label="Select"><Icon name="cursor" /></IconButton>
            <Arrow width={12} label="Select options" />
          </SelectTool>
          {['traffic', 'props', 'gear'].map(n => (
            <IconButton key={n} aria-label={n}><Icon name={n} size={n === 'traffic' ? 20 : 18} /></IconButton>
          ))}
          <Arrow width={12} label="Options menu" />
        </QuickTools>
        <FileName>ext17.SLDPRT</FileName>
        <CommandSearch>
          <Prompt>
            <svg width="12" height="12" viewBox="0 0 12 12"><path d="M2 2l4 4-4 4M6 10h5" fill="none" stroke="#fff" strokeWidth="1.500" /></svg>
          </Prompt>
          <CommandInput placeholder="Search Commands" aria-label="Search Commands" />
          <Icon name="lens" />
          <Caret $color="#777" />
        </CommandSearch>
        <WindowButtons>
          <IconButton aria-label="Help"><HelpMark>?</HelpMark></IconButton>
          <Arrow width={12} label="Help options" />
          <IconButton aria-label="Minimize"><Icon name="minimize" /></IconButton>
          <IconButton aria-label="Restore"><Icon name="frameRestore" size={18} /></IconButton>
          <IconButton aria-label="Close"><Icon name="frameClose" size={18} /></IconButton>
        </WindowButtons>
      </TitleBar>

      <ToolStrip>
        <Grip />
        {['weld', 'drawer', 'loft'].map(n => <IconButton key={n} $width={27} aria-label={n}><Icon name={n} /></IconButton>)}
        <StripRule />
        {strip.map((n, i) => <IconButton key={i} $width={27} $dim aria-label={n}><Icon name={n} size={18} /></IconButton>)}
        <Arrow width={14} label="More" color="#999" />
        {stripRight.map(([n, dim], i) => <IconButton key={i} $width={27} $dim={dim} aria-label={n}><Icon name={n} size={dim ? 18 : 20} /></IconButton>)}
        <StripEnd />
      </ToolStrip>

      <Ribbon>
        <Big icon="extrude" width={60}>Extruded<br />Boss/Base</Big>
        <Big icon="revolve" width={60}>Revolved<br />Boss/Base</Big>
        <List width={141} items={[['sweep', 'Swept Boss/Base'], ['loft', 'Lofted Boss/Base'], ['boundary', 'Boundary Boss/Base']]} />
        <RibbonRule />
        <Big icon="cut" width={51}>Extruded<br />Cut</Big>
        <Big icon="wizard" width={51} menu>Hole<br />Wizard</Big>
        <Big icon="revolveCut" width={53}>Revolved<br />Cut</Big>
        <List width={109} items={[['sweptCut', 'Swept Cut'], ['loftCut', 'Lofted Cut'], ['boundaryCut', 'Boundary Cut']]} />
        <RibbonRule $after={0} />
        <Big icon="fillet" width={37} menu>Fillet</Big>
        <Big icon="pattern" width={46} menu>Linear<br />Pattern</Big>
        <List width={64} items={[['rib', 'Rib'], ['draft', 'Draft'], ['shell', 'Shell']]} />
        <List width={83} items={[['wrap', 'Wrap'], ['intersect', 'Intersect'], ['mirror', 'Mirror']]} />
        <RibbonRule />
        <Big icon="refgeo" width={56} menu>Reference<br />Geometry</Big>
        <Big icon="curves" width={47} menu>Curves</Big>
        <RibbonRule $after={0} />
        <Big icon="instant" width={60} active>Instant3D</Big>
      </Ribbon>

      <Workspace>
        <TopRow>
          <Tabs>
            {commandTabs.map(([name, width]) => (
              <Tab key={name} $width={width} $active={tab === name} onClick={() => setTab(name)}>{name}</Tab>
            ))}
          </Tabs>
          <HeadsUp>
            {['zoomFit', 'zoomArea', 'previous', 'section', 'viewText', 'orient'].map(n => (
              <IconButton key={n} aria-label={n}><Icon name={n} size={19} /></IconButton>
            ))}
            <Arrow width={14} color="#888" label="Orientation options" />
            <IconButton aria-label="Display style"><Icon name="display" /></IconButton>
            <Arrow width={12} color="#888" label="Display options" />
            <VisibilityTool>
              <IconButton aria-label="Hide or show items"><Icon name="eye" /></IconButton>
              <Arrow width={12} color="#777" label="Visibility options" />
            </VisibilityTool>
            <IconButton aria-label="Appearance"><Icon name="appearance" /></IconButton>
            <IconButton aria-label="Scene"><Icon name="scene" /></IconButton>
            <Arrow width={14} color="#888" label="Scene options" />
            <IconButton aria-label="View settings"><Icon name="monitor" /></IconButton>
            <Arrow width={12} color="#888" label="View options" />
            <Spacer />
            {['paneLeft', 'paneRight', 'minimize', 'restore', 'close'].map(n => (
              <IconButton key={n} $color="#8a8a8a" aria-label={n}><Icon name={n} size={18} /></IconButton>
            ))}
          </HeadsUp>
        </TopRow>
        <Body>
          <SidePanel>
            <PanelHandle><Dot /></PanelHandle>
            <PanelTabs>
              {['part', 'props', 'config', 'target', 'ballDark'].map((n, i) => (
                <PanelTab key={n} $active={i === 0} aria-label={n}><Icon name={n} /></PanelTab>
              ))}
              <MoreTabs aria-label="More tabs">
                <svg width="10" height="14" viewBox="0 0 10 14"><path d="M2 2l4 5-4 5" fill="none" stroke="#aaa" strokeWidth="3.400" /><path d="M2 2l4 5-4 5" fill="none" stroke="#4a4a4a" strokeWidth="1.400" /></svg>
              </MoreTabs>
            </PanelTabs>
            <FilterBox>
              <Icon name="filter" size={17} />
              <input aria-label="Filter" />
            </FilterBox>
            <TreeArea>
              <Tree>
                <TreeRow $root><Icon name="part" />{'ext17  (Default<<Default>_Display State 1'}</TreeRow>
                {tree.map(([icon, text, open]) => (
                  <TreeRow key={text}>
                    <Expander aria-label={`Expand ${text}`}>{open && <Triangle />}</Expander>
                    <Icon name={icon} />
                    {text}
                  </TreeRow>
                ))}
              </Tree>
              <VScroll>
                <Chevron d="M1 7l4-4 4 4" />
                <VThumb />
                <Chevron d="M1 3l4 4 4-4" />
              </VScroll>
            </TreeArea>
            <HScroll>
              <Chevron d="M7 1L3 5l4 4" />
              <HThumb />
              <Chevron d="M3 1l4 4-4 4" />
            </HScroll>
          </SidePanel>
          <Viewport>
            <Model />
            <PanelToggle aria-label="Collapse panel"><Dot /></PanelToggle>
          </Viewport>
          <TaskPane>
            {['home', 'books', 'folderPlain', 'palette', 'ball', 'props'].map(n => (
              <PaneButton key={n} $active={n === 'ball'} aria-label={n}><Icon name={n} size={18} /></PaneButton>
            ))}
          </TaskPane>
        </Body>
      </Workspace>

      <BottomTabs>
        <Rewind>
          {rewindIcons.map(d => (
            <button key={d} aria-label="Scroll tabs">
              <svg width="10" height="10" viewBox="0 0 10 10"><path d={d} fill="#888" stroke="#888" /></svg>
            </button>
          ))}
        </Rewind>
        <BottomTab $width={57} $active>Model</BottomTab>
        <BottomTab $width={68}>3D Views</BottomTab>
        <BottomTab $width={108}>Motion Study 1</BottomTab>
      </BottomTabs>

      <StatusBar>
        <span>SOLIDWORKS Premium 2017 x64 Edition</span>
        <Spacer />
        <StatusCell $pad={3} />
        <StatusCell $pad={3}>Editing Part</StatusCell>
        <StatusCell $pad={11} />
        <StatusCell $pad={27} />
        <Units>MMGS <Caret /></Units>
        <Icon name="stamp" size={16} />
      </StatusBar>

      <Taskbar>
        <StartButton $width={48} aria-label="Start"><Icon name="windows" size={18} /></StartButton>
        <TaskSearch>
          <Icon name="search" size={19} />
          <input placeholder="Type here to search" aria-label="Type here to search" />
        </TaskSearch>
        <TaskButton $width={48} $gap={7} aria-label="Task view"><Icon name="taskView" size={18} /></TaskButton>
        <TaskButton $width={40} $gap={5} $fill="linear-gradient(to right, #3b7e36 8px, #3d4145 8px)" $line="#4cd137" aria-label="Browser"><Icon name="edge" size={25} /></TaskButton>
        <TaskButton $width={48} aria-label="Settings"><Icon name="gear" /></TaskButton>
        <TaskButton $width={49} aria-label="Blocks"><Icon name="blocks" size={22} /></TaskButton>
        <TaskButton $width={49} $gap={5} aria-label="Disk tool"><Icon name="disk" size={22} /></TaskButton>
        <TaskButton $width={40} $gap={5} $line="#76b9ed" aria-label="File explorer"><Icon name="explorer" size={22} /></TaskButton>
        <TaskButton $width={48} $fill="#555657" $line="#76b9ed">
          <CubeIcon><CubeFace>SW</CubeFace><CubeYear>2017</CubeYear></CubeIcon>
        </TaskButton>
        <Watermark lang="ar">خمسات</Watermark>
        <Tray>
          <IconButton $width={24} aria-label="Hidden icons"><Icon name="chevronUp" size={16} /></IconButton>
          <IconButton $width={26} aria-label="Network"><Icon name="wifi" size={16} /></IconButton>
          <IconButton $width={22} aria-label="Battery"><Icon name="battery" size={17} /></IconButton>
          <IconButton $width={24} aria-label="Security"><Icon name="shield" size={17} /></IconButton>
          <IconButton $width={24} aria-label="Volume"><Icon name="mute" size={17} /></IconButton>
          <IconButton $width={36}>ENG</IconButton>
          <Clock>11:41 AM<br />7/18/2025</Clock>
          <Notifications>
            <Icon name="notes" size={18} />
            <Badge>5</Badge>
          </Notifications>
        </Tray>
      </Taskbar>
    </Window>
  );
}
